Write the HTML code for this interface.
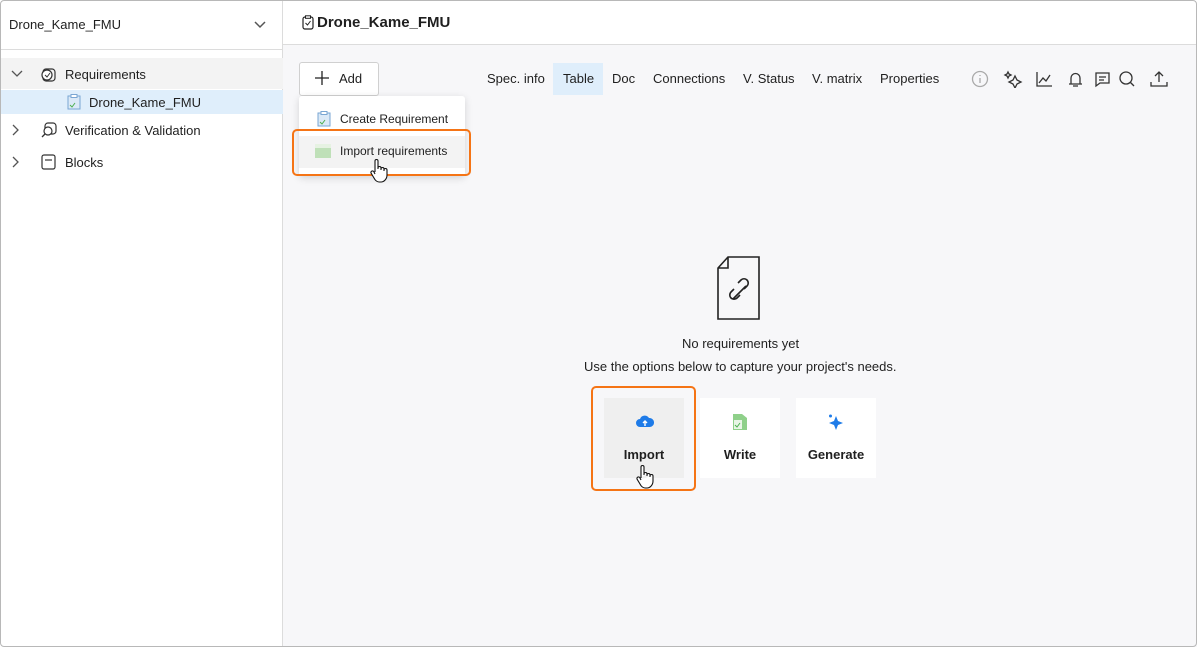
<!DOCTYPE html>
<html><head><meta charset="utf-8"><style>
*{box-sizing:border-box;margin:0;padding:0}
body{width:1197px;height:647px;overflow:hidden;font-family:"Liberation Sans",sans-serif;color:#1f1f1f;background:#fff;position:relative}
.frame{position:absolute;left:0;top:0;width:1197px;height:647px;overflow:hidden}
.bord{position:absolute;left:0;top:0;width:1197px;height:647px;border:1px solid #b8b8b8;border-radius:4px;pointer-events:none;z-index:10}
.side{position:absolute;left:0;top:0;width:283px;height:647px;background:#fff;border-right:1px solid #dcdcdc}
.main{position:absolute;left:283px;top:0;right:0;bottom:0;background:#f7f7f9}
.abs{position:absolute}
.t{font-size:13px;white-space:nowrap}
.card{position:absolute;top:398px;width:80px;height:80px;background:#fff;text-align:center;font-size:13px;font-weight:bold}
.card span{position:absolute;left:0;right:0;top:49px}
</style></head><body><div class="frame">
<div class="side">
 <div class="abs t" style="left:9px;top:17px;font-size:13px">Drone_Kame_FMU</div>
 <svg class="abs" style="left:253px;top:19px" width="14" height="10"><path d="M2 3l5 5 5-5" fill="none" stroke="#555" stroke-width="1.5"/></svg>
 <div class="abs" style="left:0;top:49px;width:283px;height:1px;background:#dcdcdc"></div>
 <div class="abs" style="left:0;top:58px;width:283px;height:31px;background:#f3f3f3"></div>
 <div class="abs" style="left:0;top:90px;width:283px;height:24px;background:#dfeefb"></div>
 <svg class="abs" style="left:10px;top:69px" width="14" height="10"><path d="M2 2l5 5 5-5" fill="none" stroke="#555" stroke-width="1.3"/></svg>
 <svg class="abs" style="left:40px;top:66px" width="18" height="18"><rect x="3" y="3" width="12" height="12" rx="3" fill="none" stroke="#333" stroke-width="1.2"/><circle cx="7" cy="9" r="5" fill="#fff" stroke="#333" stroke-width="1.2"/><path d="M5 9l2 2 3-4" fill="none" stroke="#333"/></svg>
 <div class="abs t" style="left:65px;top:67px">Requirements</div>
 <svg class="abs" style="left:67px;top:94px" width="14" height="16"><rect x="1" y="2" width="12" height="13" fill="#dbe9f7" stroke="#7aa6d3"/><rect x="4" y="0.5" width="6" height="3" fill="#fff" stroke="#7aa6d3"/><path d="M3 11l2 2 3-4" fill="none" stroke="#4caf50"/></svg>
 <div class="abs t" style="left:89px;top:95px">Drone_Kame_FMU</div>
 <svg class="abs" style="left:10px;top:124px" width="12" height="12"><path d="M3 1l5 5-5 5" fill="none" stroke="#555" stroke-width="1.3"/></svg>
 <svg class="abs" style="left:40px;top:121px" width="18" height="18"><rect x="5" y="2" width="11" height="11" rx="3" fill="none" stroke="#333" stroke-width="1.2"/><circle cx="8" cy="10" r="4" fill="#fff" stroke="#333" stroke-width="1.2"/><path d="M5 13l-3 3" stroke="#333" stroke-width="1.3"/></svg>
 <div class="abs t" style="left:65px;top:123px">Verification &amp; Validation</div>
 <svg class="abs" style="left:10px;top:156px" width="12" height="12"><path d="M3 1l5 5-5 5" fill="none" stroke="#555" stroke-width="1.3"/></svg>
 <svg class="abs" style="left:41px;top:154px" width="16" height="16"><rect x="1" y="1" width="13" height="14" rx="2" fill="none" stroke="#333" stroke-width="1.2"/><path d="M4 6h7" stroke="#333" stroke-width="1.2"/></svg>
 <div class="abs t" style="left:65px;top:155px">Blocks</div>
</div>
<div class="main">
 <div class="abs" style="left:0;top:0;right:0;height:45px;background:#fff;border-bottom:1px solid #dcdcdc"></div>
 <svg class="abs" style="left:19px;top:15px" width="12" height="15"><rect x="1" y="2" width="10" height="12" rx="2" fill="none" stroke="#222" stroke-width="1.2"/><rect x="3.5" y="0.8" width="5" height="2.5" fill="#fff" stroke="#222"/><path d="M3.5 8l2 2 3-4" fill="none" stroke="#222"/></svg>
 <div class="abs" style="left:34px;top:14px;font-size:15px;font-weight:bold">Drone_Kame_FMU</div>
 <div class="abs" style="left:16px;top:62px;width:80px;height:34px;border:1px solid #d0d0d0;border-radius:3px;background:#fff"></div>
 <svg class="abs" style="left:31px;top:70px" width="16" height="16"><path d="M8 1v14M1 8h14" stroke="#222" stroke-width="1.3"/></svg>
 <div class="abs t" style="left:56px;top:71px">Add</div>
 <div class="abs" style="left:16px;top:96px;width:166px;height:80px;background:#fff;border-radius:3px;box-shadow:0 2px 8px rgba(0,0,0,.15)"></div>
 <svg class="abs" style="left:34px;top:111px" width="14" height="16"><rect x="1" y="2" width="12" height="13" fill="#dbe9f7" stroke="#7aa6d3"/><rect x="4" y="0.5" width="6" height="3" fill="#fff" stroke="#7aa6d3"/><path d="M3 11l2 2 3-4" fill="none" stroke="#4caf50"/></svg>
 <div class="abs" style="left:57px;top:112px;font-size:12px">Create Requirement</div>
 <div class="abs" style="left:16px;top:136px;width:166px;height:32px;background:#f3f3f3"></div>
 <svg class="abs" style="left:32px;top:144px" width="17" height="14"><path d="M0 0h11l5 4v10H0z" fill="#bfe0b8"/><rect x="0" y="0" width="16" height="4" fill="#e6f2e2"/></svg>
 <div class="abs" style="left:57px;top:144px;font-size:12px">Import requirements</div>
 <div class="abs" style="left:9px;top:129px;width:179px;height:47px;border:2px solid #f57415;border-radius:5px"></div>
 <div class="abs" style="left:270px;top:63px;width:50px;height:32px;background:#dfeefb"></div>
 <div class="abs t" style="left:204px;top:71px">Spec. info</div>
 <div class="abs t" style="left:280px;top:71px">Table</div>
 <div class="abs t" style="left:329px;top:71px">Doc</div>
 <div class="abs t" style="left:370px;top:71px">Connections</div>
 <div class="abs t" style="left:460px;top:71px">V. Status</div>
 <div class="abs t" style="left:529px;top:71px">V. matrix</div>
 <div class="abs t" style="left:597px;top:71px">Properties</div>
 <svg class="abs" style="left:688px;top:70px" width="210" height="18" fill="none" stroke="#333" stroke-width="1.3">
  <circle cx="9" cy="9" r="7.5" stroke="#aaa"/><path d="M9 8v5M9 5v1" stroke="#aaa"/>
  <path d="M44 6l2 4 4 2-4 2-2 4-2-4-4-2 4-2z M37 2l1 2 2 1-2 1-1 2-1-2-2-1 2-1z"/>
  <path d="M66 2v14h15 M68 13l4-5 3 3 4-6"/>
  <path d="M100 14V8a4.5 4.5 0 0 1 9 0v6h2H98zM102 16h5"/>
  <path d="M125 3h13v10h-9l-4 3z M128 7h7M128 10h5"/>
  <circle cx="155" cy="8" r="6"/><path d="M159 12l4 4"/>
  <path d="M188 2v10M184 6l4-4 4 4M180 12v4h16v-4"/>
 </svg>
 <svg class="abs" style="left:433px;top:256px" width="46" height="64" fill="none" stroke="#222" stroke-width="1.6"><path d="M12 1h31v62H2V12z M2 12h10V1"/><path d="M22 27l3-3a4 4 0 0 1 6 6l-3 3 M24 39l-3 3a4 4 0 0 1-6-6l3-3 M17 43l13-13"/></svg>
 <div class="abs t" style="left:399px;top:336px">No requirements yet</div>
 <div class="abs t" style="left:301px;top:359px">Use the options below to capture your project's needs.</div>
 <div class="card" style="left:321px;background:#efefef"><svg style="position:absolute;left:32px;top:17px" width="18" height="14"><path d="M4 12a4 4 0 0 1 0-8 5 5 0 0 1 9-1 4 4 0 0 1 1 9z" fill="#1e7be8"/><path d="M9 11V6M7 8l2-2 2 2" stroke="#fff" stroke-width="1.4" fill="none"/></svg><span>Import</span></div>
 <div class="card" style="left:417px"><svg style="position:absolute;left:33px;top:16px" width="14" height="16"><path d="M0 0h9l5 4v12H0z" fill="#8fd08a"/><rect x="1" y="6" width="8" height="9" fill="#e8f5e6"/><path d="M2 11l2 2 3-4" stroke="#4caf50" fill="none"/></svg><span>Write</span></div>
 <div class="card" style="left:513px"><svg style="position:absolute;left:31px;top:15px" width="18" height="18"><path d="M9 3l2 5 5 2-5 2-2 5-2-5-5-2 5-2z" fill="#1e7be8"/><circle cx="3.5" cy="3" r="1.5" fill="#1e7be8"/></svg><span>Generate</span></div>
 <div class="abs" style="left:308px;top:386px;width:105px;height:105px;border:2px solid #f57415;border-radius:5px"></div>
 <svg class="abs" style="left:352px;top:464px" width="20" height="26"><path d="M6 14V3a1.5 1.5 0 0 1 3 0v8 M9 10a1.5 1.5 0 0 1 3 0v2 M12 11a1.5 1.5 0 0 1 3 0v2 M15 12a1.5 1.5 0 0 1 3 0v5c0 4-3 7-6 7H10c-2 0-4-2-5-4l-3-5a1.5 1.5 0 0 1 3-1l1 2" fill="#fff" stroke="#111" stroke-width="1.1"/></svg>
 <svg class="abs" style="left:86px;top:158px" width="20" height="26"><path d="M6 14V3a1.5 1.5 0 0 1 3 0v8 M9 10a1.5 1.5 0 0 1 3 0v2 M12 11a1.5 1.5 0 0 1 3 0v2 M15 12a1.5 1.5 0 0 1 3 0v5c0 4-3 7-6 7H10c-2 0-4-2-5-4l-3-5a1.5 1.5 0 0 1 3-1l1 2" fill="#fff" stroke="#111" stroke-width="1.1"/></svg>
</div>
</div><div class="bord"></div></body></html>
